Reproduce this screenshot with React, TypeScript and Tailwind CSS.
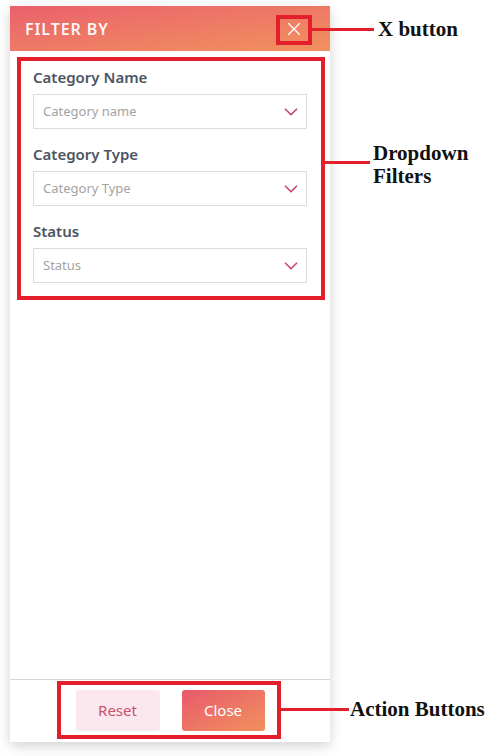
import { X, ChevronDown } from "lucide-react";

const fields = [
  { label: "Category Name", placeholder: "Category name" },
  { label: "Category Type", placeholder: "Category Type" },
  { label: "Status", placeholder: "Status" },
];

const App = () => {
  return (
    <div className="relative w-[494px] h-[756px] bg-white overflow-hidden font-['Noto_Sans',sans-serif]">
      {/* Filter panel */}
      <div className="ml-[10px] pt-[6px]">
        <div className="w-[320px] h-[736px] flex flex-col bg-white shadow-[0_4px_12px_rgba(0,0,0,.18)]">
          {/* Header */}
          <div className="h-[45px] flex items-center justify-between pl-[15px] pr-[25px] bg-gradient-to-br from-[#ea606c] to-[#f1915d]">
            <h1 className="text-[16px] font-semibold tracking-[0.9px] text-white/95">FILTER BY</h1>
            <button className="text-white">
              <X size={22} strokeWidth={1.3} />
            </button>
          </div>

          {/* Filters */}
          <div className="flex-1 px-[23px] pt-[16px] flex flex-col gap-[15px]">
            {fields.map((f) => (
              <div key={f.label} className="flex flex-col gap-[7px]">
                <label className="text-[15px] leading-[20px] font-semibold text-[#4b5563]">{f.label}</label>
                <div className="h-[35px] flex items-center justify-between pl-[9px] pr-[4px] border border-[#dcdcdc] bg-white">
                  <span className="text-[13px] text-[#a3a3a3]">{f.placeholder}</span>
                  <ChevronDown size={22} strokeWidth={1.8} className="text-[#c9456d]" />
                </div>
              </div>
            ))}
          </div>

          {/* Footer */}
          <div className="h-[63px] border-t border-[#d6d6d6] flex justify-center gap-[22px] pt-[10px]">
            <button className="w-[84px] h-[41px] rounded-[3px] bg-[#fae8ee] text-[15px] text-[#c9506f]">Reset</button>
            <button className="w-[83px] h-[41px] rounded-[3px] bg-gradient-to-br from-[#e8586b] to-[#f1905c] text-[15px] text-white">
              Close
            </button>
          </div>
        </div>
      </div>

      {/* Annotations */}
      <div className="absolute left-[276px] top-[15px] w-[36px] h-[30px] border-4 border-[#e41e2b]" />
      <div className="absolute left-[312px] top-[28px] w-[62px] h-[3px] bg-[#e41e2b]" />
      <div className="absolute left-[378px] top-[17px] text-[21px] leading-[24px] font-bold text-[#111] font-['Liberation_Serif',serif]">
        X button
      </div>

      <div className="absolute left-[17px] top-[57px] w-[308px] h-[243px] border-4 border-[#e41e2b]" />
      <div className="absolute left-[325px] top-[161px] w-[45px] h-[3px] bg-[#e41e2b]" />
      <div className="absolute left-[373px] top-[142px] text-[21px] leading-[23px] font-bold text-[#111] font-['Liberation_Serif',serif]">
        Dropdown
        <br />
        Filters
      </div>

      <div className="absolute left-[57px] top-[681px] w-[224px] h-[58px] border-4 border-[#e41e2b]" />
      <div className="absolute left-[281px] top-[708px] w-[68px] h-[3px] bg-[#e41e2b]" />
      <div className="absolute left-[350px] top-[697px] text-[21px] leading-[24px] font-bold text-[#111] font-['Liberation_Serif',serif]">
        Action Buttons
      </div>
    </div>
  );
};

export default App;
